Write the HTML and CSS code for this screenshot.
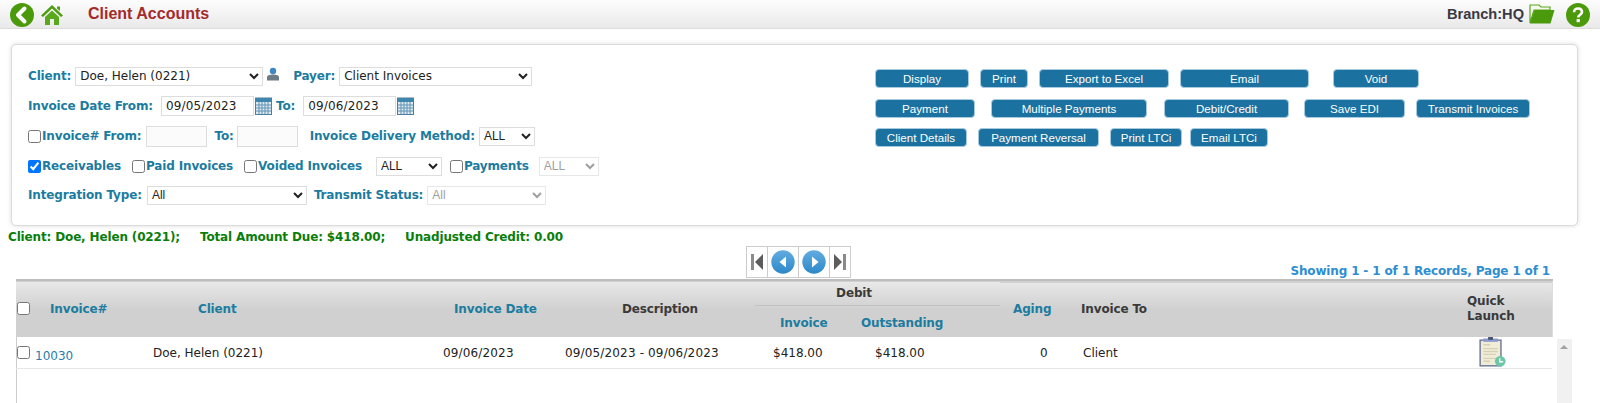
FILE: index.html
```html
<!DOCTYPE html>
<html lang="en">
<head>
    <meta charset="UTF-8">
    <meta name="viewport" content="width=device-width, initial-scale=1.0">
    <title>Client Accounts</title>
    <link rel="stylesheet" href="styles.css">
</head>
<body>
    <div class="topbar">
        <svg class="ico-back" viewBox="0 0 24 24"><circle cx="12" cy="12" r="12" fill="#4b9a0c"/><path d="M14.5 5.5 L8 12 L14.5 18.5" fill="none" stroke="#fff" stroke-width="4" stroke-linecap="round" stroke-linejoin="round"/></svg>
        <svg class="ico-home" viewBox="0 0 22 20"><path d="M11 0 L22 10.5 L20 12 L11 3.6 L2 12 L0 10.5 Z M16 1.5 H19 V6 L16 3.5 Z" fill="#4f9d12"/><path d="M4 12 L11 5.5 L18 12 V20 H13 V14 H9 V20 H4 Z" fill="#5aa81c"/></svg>
        <div class="page-title">Client Accounts</div>
        <div class="branch">Branch:HQ</div>
        <svg class="ico-folder" viewBox="0 0 26 20"><path d="M1 1 H10 L12 3 H21 V6 H5 L1 19 Z" fill="#f4f8ee" stroke="#5aa81c" stroke-width="1.2"/><path d="M5.5 6 H25.5 L21.5 19.5 H1 Z" fill="#4b9a0c"/></svg>
        <svg class="ico-help" viewBox="0 0 24 24"><circle cx="12" cy="12" r="12" fill="#4b9a0c"/><path d="M8 9.2 C8 6.8 9.8 5.5 12 5.5 C14.4 5.5 16 6.9 16 8.9 C16 11.6 12.2 11.8 12.2 14.4" fill="none" stroke="#fff" stroke-width="2.6"/><rect x="10.6" y="16" width="3.2" height="3.2" fill="#fff"/></svg>
    </div>

    <div class="panel">
        <div class="filters">
            <div class="form-row">
                <label class="lbl">Client:</label>
                <select class="sel sel-client"><option>Doe, Helen (0221)</option></select>
                <svg class="ico-person" viewBox="0 0 14 14"><circle cx="7" cy="4" r="3.2" fill="#3d87c4"/><path d="M1 13.5 V10 C1 8.5 3 7.6 7 7.6 C11 7.6 13 8.5 13 10 V13.5 Z" fill="#6d7b86"/></svg>
                <label class="lbl lbl-payer">Payer:</label>
                <select class="sel sel-payer"><option>Client Invoices</option></select>
            </div>
            <div class="form-row">
                <label class="lbl">Invoice Date From:</label>
                <input class="txt txt-date txt-from" type="text" value="09/05/2023">
                <svg class="ico-cal" viewBox="0 0 17 18"><rect x="0.5" y="1" width="16" height="16.5" fill="#dfeaf2" stroke="#4a7f9f"/><rect x="0.5" y="1" width="16" height="4" fill="#3f86ad"/><path d="M1 8 H16 M1 11 H16 M1 14 H16 M4 5 V17 M7 5 V17 M10 5 V17 M13 5 V17" stroke="#5f93b3" stroke-width="1"/></svg>
                <label class="lbl lbl-to">To:</label>
                <input class="txt txt-date txt-to" type="text" value="09/06/2023">
                <svg class="ico-cal" viewBox="0 0 17 18"><rect x="0.5" y="1" width="16" height="16.5" fill="#dfeaf2" stroke="#4a7f9f"/><rect x="0.5" y="1" width="16" height="4" fill="#3f86ad"/><path d="M1 8 H16 M1 11 H16 M1 14 H16 M4 5 V17 M7 5 V17 M10 5 V17 M13 5 V17" stroke="#5f93b3" stroke-width="1"/></svg>
            </div>
            <div class="form-row">
                <input class="chk" type="checkbox">
                <label class="lbl">Invoice# From:</label>
                <input class="txt txt-num txt-num-from" type="text" disabled>
                <label class="lbl lbl-num-to">To:</label>
                <input class="txt txt-num txt-num-to" type="text" disabled>
                <label class="lbl lbl-delivery">Invoice Delivery Method:</label>
                <select class="sel sel-all sel-delivery"><option>ALL</option></select>
            </div>
            <div class="form-row">
                <input class="chk" type="checkbox" checked>
                <label class="lbl">Receivables</label>
                <input class="chk chk-paid" type="checkbox">
                <label class="lbl">Paid Invoices</label>
                <input class="chk chk-voided" type="checkbox">
                <label class="lbl">Voided Invoices</label>
                <select class="sel sel-all sel-voided"><option>ALL</option></select>
                <input class="chk chk-payments" type="checkbox">
                <label class="lbl">Payments</label>
                <select class="sel sel-all sel-payments" disabled><option>ALL</option></select>
            </div>
            <div class="form-row form-row-last">
                <label class="lbl">Integration Type:</label>
                <select class="sel sel-all sel-integration"><option>All</option></select>
                <label class="lbl lbl-transmit">Transmit Status:</label>
                <select class="sel sel-all sel-transmit" disabled><option>All</option></select>
            </div>
        </div>
        <div class="actions">
            <div class="btn-row">
                <button class="btn w-94">Display</button>
                <button class="btn w-48">Print</button>
                <button class="btn w-130">Export to Excel</button>
                <button class="btn w-129">Email</button>
                <button class="btn w-86 push-13">Void</button>
            </div>
            <div class="btn-row">
                <button class="btn w-100">Payment</button>
                <button class="btn w-156 push-5">Multiple Payments</button>
                <button class="btn w-125 push-6">Debit/Credit</button>
                <button class="btn w-101 push-4">Save EDI</button>
                <button class="btn w-114">Transmit Invoices</button>
            </div>
            <div class="btn-row">
                <button class="btn w-92">Client Details</button>
                <button class="btn w-121">Payment Reversal</button>
                <button class="btn w-72">Print LTCi</button>
                <button class="btn w-78 pull-3">Email LTCi</button>
            </div>
        </div>
    </div>

    <div class="summary">
        <span>Client: Doe, Helen (0221);</span>
        <span>Total Amount Due: $418.00;</span>
        <span>Unadjusted Credit: 0.00</span>
    </div>

    <div class="pager-row">
        <div></div>
        <div class="pager">
            <div class="pg-cell pg-end"><svg viewBox="0 0 12 16" width="12" height="16"><rect x="0" y="0" width="3" height="16" fill="#8a8a8a"/><path d="M12 0 V16 L4 8 Z" fill="#5c5c5c"/></svg></div>
            <div class="pg-cell pg-mid"><svg viewBox="0 0 24 24" width="24" height="24"><defs><linearGradient id="pgblue" x1="0" y1="0" x2="0" y2="1"><stop offset="0" stop-color="#62ace0"/><stop offset="1" stop-color="#2c88c8"/></linearGradient></defs><circle cx="12" cy="12" r="11.7" fill="url(#pgblue)"/><path d="M15 6.5 V17.5 L8.5 12 Z" fill="#fff"/></svg></div>
            <div class="pg-cell pg-mid"><svg viewBox="0 0 24 24" width="24" height="24"><circle cx="12" cy="12" r="11.7" fill="url(#pgblue)"/><path d="M10 6.5 V17.5 L16.5 12 Z" fill="#fff"/></svg></div>
            <div class="pg-cell pg-end pg-last"><svg viewBox="0 0 12 16" width="12" height="16"><path d="M0 0 V16 L8 8 Z" fill="#5c5c5c"/><rect x="9" y="0" width="3" height="16" fill="#8a8a8a"/></svg></div>
        </div>
        <div class="records">Showing 1 - 1 of 1 Records, Page 1 of 1</div>
    </div>

    <div class="grid-wrap">
        <div class="grid">
            <table class="tbl">
                <colgroup>
                    <col class="c1"><col class="c2"><col class="c3"><col class="c4"><col class="c5"><col class="c6"><col class="c7"><col class="c8"><col class="c9"><col class="c10">
                </colgroup>
                <thead>
                    <tr>
                        <th rowspan="2" class="th-chk"><input class="chk" type="checkbox"></th>
                        <th rowspan="2" class="link-h h-inv">Invoice#</th>
                        <th rowspan="2" class="link-h h-client">Client</th>
                        <th rowspan="2" class="link-h h-date">Invoice Date</th>
                        <th rowspan="2" class="h-desc">Description</th>
                        <th colspan="2" class="h-debit">Debit</th>
                        <th rowspan="2" class="link-h h-aging">Aging</th>
                        <th rowspan="2" class="h-to">Invoice To</th>
                        <th rowspan="2" class="h-quick">Quick<br>Launch</th>
                    </tr>
                    <tr>
                        <th class="link-h h-sub h-debit-inv">Invoice</th>
                        <th class="link-h h-sub h-out">Outstanding</th>
                    </tr>
                </thead>
                <tbody>
                    <tr>
                        <td class="td-chk"><input class="chk" type="checkbox"></td>
                        <td class="d-inv"><a class="inv-link" href="#">10030</a></td>
                        <td class="d-client">Doe, Helen (0221)</td>
                        <td class="d-date">09/06/2023</td>
                        <td class="d-desc">09/05/2023 - 09/06/2023</td>
                        <td class="d-amt">$418.00</td>
                        <td class="d-out">$418.00</td>
                        <td class="d-aging">0</td>
                        <td class="d-to">Client</td>
                        <td class="d-quick">
                            <svg class="ico-clip" viewBox="0 0 28 32"><rect x="1" y="2.5" width="23" height="28" fill="#6e7a94"/><rect x="2.5" y="4" width="20" height="25" fill="#f0ecd8"/><rect x="5" y="1.5" width="15" height="3.5" fill="#8a9ad0"/><rect x="10" y="0" width="5" height="3" fill="#4a5570"/><path d="M5 8 H12 M5 12 H20 M5 15 H20 M5 18 H18 M5 22 H20 M5 25 H12" stroke="#d6d1b6" stroke-width="1.4"/><circle cx="22.5" cy="25" r="5.5" fill="#6cc6a8"/><path d="M22 22 V25.5 H25.5" fill="none" stroke="#fff" stroke-width="1.4"/></svg>
                        </td>
                    </tr>
                </tbody>
            </table>
        </div>
        <div class="scrollbar"><div class="scroll-up"></div></div>
    </div>
</body>
</html>
```
FILE: styles.css
```css
* {
    margin: 0; padding: 0; box-sizing: border-box;
}
html, body {
    height: 403px; overflow: hidden;
}
body {
    background: #fff; color: #222; font-family: "DejaVu Sans", Verdana, sans-serif; font-size: 12px;
}

/* top bar */
.topbar {
    display: flex; align-items: center; height: 29px; padding: 0 10px;
    background: linear-gradient(#fdfdfd, #e9e9e9); border-bottom: 1px solid #dcdcdc;
}
.ico-back { width: 24px; height: 24px; margin-top: 2px; }
.ico-home { width: 22px; height: 20px; margin: 2px 0 0 7px; }
.page-title {
    margin-left: 25px; flex: 1;
    font: bold 16px "Liberation Sans", Arial, sans-serif; color: #a52a2a;
}
.branch {
    font: bold 14.6px "Liberation Sans", Arial, sans-serif; color: #3a3a44;
}
.ico-folder { width: 26px; height: 20px; margin: 0 0 0 5px; }
.ico-help { width: 24px; height: 24px; margin: 1px 0 0 11px; }

/* filter panel */
.panel {
    display: flex; width: 1567px; height: 182px; margin: 15px 0 0 11px; padding: 16px 0 0 16px;
    background: #fff; border: 1px solid #dcdcdc; border-radius: 5px;
    box-shadow: 0 0 4px rgba(0, 0, 0, 0.15);
}
.filters { width: 847px; }
.form-row {
    display: flex; align-items: center; height: 30px; white-space: nowrap;
}
.form-row-last { margin-top: -1px; }
.lbl {
    color: #1c7c9f; font-size: 12px; font-weight: bold; letter-spacing: -0.15px;
}
.sel, .txt {
    height: 19px; font-family: "DejaVu Sans", Verdana, sans-serif; font-size: 12px; color: #222;
    background: #fff; border: 1px solid #ddd;
}
.sel-all { font-family: "Liberation Sans", Arial, sans-serif; }
.sel:disabled { color: #777; }
.sel-client { width: 188px; margin-left: 4px; }
.ico-person { width: 14px; height: 14px; margin: -4px 0 0 3px; }
.lbl-payer { margin-left: 13px; }
.sel-payer { width: 193px; margin-left: 4px; }
.txt-date { height: 20px; width: 93px; padding-left: 4px; letter-spacing: 0.15px; }
.txt-from { margin-left: 8px; }
.ico-cal { width: 17px; height: 18px; margin-left: 1px; }
.lbl-to { margin-left: 4px; }
.txt-to { margin-left: 8px; }
.chk { width: 13px; height: 13px; margin-right: 1px; }
.txt-num { width: 61px; height: 21px; background: #fbfbfb; }
.txt-num-from { margin-left: 5px; }
.lbl-num-to { margin-left: 7px; }
.txt-num-to { margin-left: 3px; }
.lbl-delivery { margin-left: 12px; }
.sel-delivery { width: 56px; margin-left: 4px; }
.chk-paid { margin-left: 11px; }
.chk-voided { margin-left: 11px; }
.sel-voided { width: 66px; margin-left: 14px; }
.chk-payments { margin-left: 8px; }
.sel-payments { width: 60px; margin-left: 10px; }
.sel-integration { width: 160px; margin-left: 5px; }
.lbl-transmit { margin-left: 7px; }
.sel-transmit { width: 119px; margin-left: 4px; }

/* action buttons */
.actions { padding-top: 3px; }
.btn-row {
    display: flex; align-items: center; gap: 11px; height: 29.5px;
}
.btn {
    height: 19px; font: 11.6px "Liberation Sans", Arial, sans-serif; color: #fff;
    background: #1b72a0; border: 1px solid #a8cadf; border-radius: 4px;
}
.w-48 { width: 48px; }
.w-72 { width: 72px; }
.w-78 { width: 78px; }
.w-86 { width: 86px; }
.w-92 { width: 92px; }
.w-94 { width: 94px; }
.w-100 { width: 100px; }
.w-101 { width: 101px; }
.w-114 { width: 114px; }
.w-121 { width: 121px; }
.w-125 { width: 125px; }
.w-129 { width: 129px; }
.w-130 { width: 130px; }
.w-156 { width: 156px; }
.push-4 { margin-left: 4px; }
.push-5 { margin-left: 5px; }
.push-6 { margin-left: 6px; }
.push-13 { margin-left: 13px; }
.pull-3 { margin-left: -3px; }

/* summary and pager */
.summary {
    display: flex; gap: 20px; height: 16px; margin-top: 3px; padding-left: 8px;
    color: #0a7d0a; font-size: 12px; font-weight: bold; line-height: 16px; letter-spacing: -0.15px;
}
.pager-row {
    display: grid; grid-template-columns: 1fr auto 1fr; height: 33px; margin-top: 1px; padding: 0 50px 0 47px;
}
.pager {
    display: flex; height: 32px; border: 1px solid #ccc;
}
.pg-cell {
    display: flex; align-items: center; justify-content: center; border-right: 1px solid #ccc;
}
.pg-end { width: 21px; }
.pg-mid { width: 31px; }
.pg-last { border-right: 0; width: 20px; }
.records {
    align-self: end; text-align: right; color: #2d8ed3; font-size: 12px; font-weight: bold; line-height: 16px;
    letter-spacing: -0.15px;
}

/* grid */
.grid-wrap {
    display: flex; margin: 0 0 0 16px;
}
.grid {
    width: 1536px; height: 130px; border-left: 1px solid #ccc;
}
.tbl {
    width: 1536px; margin-left: -1px; table-layout: fixed; border-collapse: collapse;
}
.c1 { width: 18px; }
.c2 { width: 114px; }
.c3 { width: 282px; }
.c4 { width: 125px; }
.c5 { width: 200px; }
.c6 { width: 90px; }
.c7 { width: 155px; }
.c8 { width: 70px; }
.c9 { width: 370px; }
.c10 { width: 112px; }
thead tr:first-child { height: 25px; }
thead tr:last-child { height: 32px; }
thead {
    background: linear-gradient(#e8e8e8, #d0d0d0 50%, #d0d0d0);
    border-top: 2px solid #bdbdbd; border-right: 1px solid #ddd;
}
th {
    text-align: left; color: #3a3a3a; font-size: 12px; font-weight: bold; letter-spacing: -0.15px;
}
.link-h { color: #1c7c9f; }
.th-chk { padding: 2px 0 0 1px; }
.h-inv { padding-left: 16px; }
.h-client { padding-left: 50px; }
.h-date { padding-left: 24px; }
.h-desc { padding-left: 67px; }
.h-debit { text-align: center; border-bottom: 1px solid #c2c2c2; padding-right: 47px; }
.h-sub { padding-top: 3px; }
.h-debit-inv { padding-left: 25px; }
.h-out { padding-left: 16px; }
.h-aging { padding-left: 13px; }
.h-to { padding-left: 11px; }
.h-quick { padding-left: 27px; line-height: 15px; }
tbody tr { height: 31px; border-bottom: 1px solid #e6e6e6; }
td { font-size: 12px; color: #222; }
.td-chk { padding: 2px 0 0 1px; }
.d-inv { padding: 7px 0 0 1px; }
.inv-link { color: #2a7cb0; text-decoration: none; }
.d-client { padding-left: 5px; }
.d-date { padding-left: 13px; letter-spacing: 0.15px; }
.d-desc { padding-left: 10px; letter-spacing: 0.15px; }
.d-amt { padding-left: 18px; }
.d-out { padding-left: 30px; }
.d-aging { padding-left: 40px; }
.d-to { padding-left: 13px; }
.d-quick { padding-left: 38px; line-height: 0; }
.ico-clip { width: 28px; height: 31px; }
.scrollbar {
    width: 15px; height: 70px; margin: 60px 0 0 5px; background: #f1f1f1;
}
.scroll-up {
    width: 0; height: 0; margin: 6px 0 0 3px;
    border-left: 4px solid transparent; border-right: 4px solid transparent; border-bottom: 4px solid #a3a3a3;
}
```
